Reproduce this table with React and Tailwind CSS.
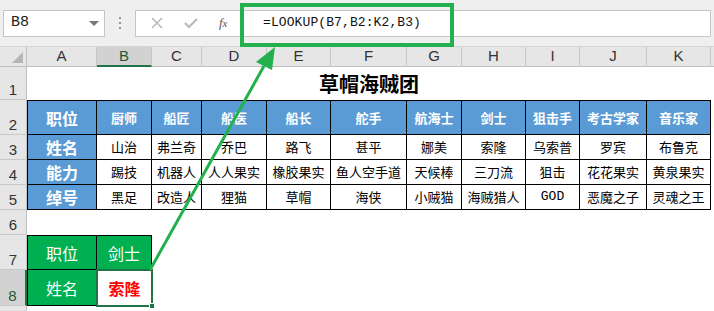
import React from 'react';

const cols = [
  { key: 'A', w: 'w-[70px]' },
  { key: 'B', w: 'w-[55px]' },
  { key: 'C', w: 'w-[50px]' },
  { key: 'D', w: 'w-[65px]' },
  { key: 'E', w: 'w-[64px]' },
  { key: 'F', w: 'w-[76px]' },
  { key: 'G', w: 'w-[55px]' },
  { key: 'H', w: 'w-[64px]' },
  { key: 'I', w: 'w-[54px]' },
  { key: 'J', w: 'w-[67px]' },
  { key: 'K', w: 'w-[64px]' },
];

const table = [
  ['职位', '厨师', '船匠', '船医', '船长', '舵手', '航海士', '剑士', '狙击手', '考古学家', '音乐家'],
  ['姓名', '山治', '弗兰奇', '乔巴', '路飞', '甚平', '娜美', '索隆', '乌索普', '罗宾', '布鲁克'],
  ['能力', '踢技', '机器人', '人人果实', '橡胶果实', '鱼人空手道', '天候棒', '三刀流', '狙击', '花花果实', '黄泉果实'],
  ['绰号', '黑足', '改造人', '狸猫', '草帽', '海侠', '小贼猫', '海贼猎人', 'GOD', '恶魔之子', '灵魂之王'],
];

const cjk = "font-['SimSun','Noto_Sans_CJK_SC',sans-serif]";

function RowHead({ n, h, active }) {
  return (
    <div
      className={`w-[27px] shrink-0 ${h} flex items-end justify-center pb-[2px] border-b border-[#c8c8c8] text-[15px] leading-none font-['Liberation_Sans',sans-serif] ${
        active ? 'bg-[#d2d2d2] border-r-2 border-r-[#217346] text-[#1d5a35]' : 'bg-[#e6e6e6] border-r border-r-[#c0c0c0] text-[#333]'
      }`}
    >
      {n}
    </div>
  );
}

function Toolbar() {
  return (
    <div className="h-[47px] bg-[#efefef] flex items-center px-[3px] gap-0 border-b border-[#d4d4d4]">
      <div className="w-[102px] h-[27px] bg-white border border-[#c6c6c6] flex items-center justify-between pl-[7px] pr-[5px]">
        <span className="text-[15px] font-['Liberation_Mono',monospace] text-[#222]">B8</span>
        <span className="w-0 h-0 border-l-[5px] border-r-[5px] border-t-[5px] border-l-transparent border-r-transparent border-t-[#777]" />
      </div>
      <div className="w-[30px] flex flex-col items-center gap-[3px]">
        <span className="w-[2px] h-[2px] bg-[#999]" />
        <span className="w-[2px] h-[2px] bg-[#999]" />
        <span className="w-[2px] h-[2px] bg-[#999]" />
      </div>
      <div className="w-[106px] h-[27px] bg-white border border-[#c6c6c6] flex items-center justify-around pl-[4px] pr-[2px]">
        <svg width="12" height="12" viewBox="0 0 12 12" stroke="#b8b8b8" strokeWidth="1.5">
          <path d="M1 1 L11 11 M11 1 L1 11" />
        </svg>
        <svg width="14" height="11" viewBox="0 0 14 11" fill="none" stroke="#b8b8b8" strokeWidth="2">
          <path d="M1 5 L5 9 L13 1" />
        </svg>
        <span className="text-[13px] italic font-['Liberation_Serif',serif] text-[#555]">
          f<span className="text-[11px]">x</span>
        </span>
      </div>
      <div className="flex-1 h-[27px] bg-white border border-[#c6c6c6] ml-[2px] flex items-center pl-[19px]">
        <span className="text-[13px] font-['Liberation_Mono',monospace] text-[#111] tracking-[0.1px]">
          =LOOKUP(B7,B2:K2,B3)
        </span>
      </div>
    </div>
  );
}

export default function App() {
  return (
    <div className="relative w-[714px] h-[311px] overflow-hidden bg-white">
      <Toolbar />

      {/* column headers */}
      <div className="flex h-[20px]">
        <div className="w-[27px] shrink-0 bg-[#e6e6e6] border-r border-b border-[#c0c0c0] relative">
          <span className="absolute right-[3px] bottom-[3px] w-0 h-0 border-b-[11px] border-l-[11px] border-l-transparent border-b-[#b5b5b5]" />
        </div>
        {cols.map((c) => (
          <div
            key={c.key}
            className={`${c.w} shrink-0 flex items-center justify-center border-r border-[#c8c8c8] text-[15px] font-['Liberation_Sans',sans-serif] ${
              c.key === 'B' ? 'bg-[#d2d2d2] border-b-2 border-b-[#217346] text-[#1d5a35]' : 'bg-[#e6e6e6] border-b border-b-[#c0c0c0] text-[#333]'
            }`}
          >
            {c.key}
          </div>
        ))}
        <div className="flex-1 bg-[#e6e6e6] border-b border-[#c0c0c0]" />
      </div>

      {/* row 1: merged title */}
      <div className="flex">
        <RowHead n="1" h="h-[33px]" />
        <div className={`w-[684px] h-[33px] flex items-center justify-center text-[20px] font-bold text-black ${cjk}`}>
          草帽海贼团
        </div>
      </div>

      {/* rows 2-5 */}
      {table.map((row, ri) => {
        const tall = ri === 0;
        return (
          <div key={ri} className="flex">
            <RowHead n={ri + 2} h={tall ? 'h-[35px]' : 'h-[25px]'} />
            {row.map((txt, ci) => {
              const head = ri === 0 || ci === 0;
              return (
                <div
                  key={ci}
                  className={`${cols[ci].w} shrink-0 ${tall ? 'h-[35px]' : 'h-[25px]'} flex items-center justify-center border-r border-b border-black ${
                    ri === 0 ? 'border-t' : ''
                  } ${ci === 0 ? 'border-l text-[16px]' : 'text-[13px]'} ${
                    head ? 'bg-[#5b9bd5] text-white font-bold' : 'bg-white text-black'
                  } ${txt === 'GOD' ? "font-['Liberation_Mono',monospace]" : cjk} whitespace-nowrap`}
                >
                  {txt}
                </div>
              );
            })}
          </div>
        );
      })}

      {/* row 6 */}
      <div className="flex">
        <RowHead n="6" h="h-[25px]" />
      </div>

      {/* rows 7-8: lookup result */}
      <div className="flex">
        <RowHead n="7" h="h-[35px]" />
        <div className={`w-[70px] h-[35px] shrink-0 bg-[#00b050] border border-black text-white text-[16px] flex items-center justify-center ${cjk}`}>
          职位
        </div>
        <div className={`w-[55px] h-[35px] shrink-0 bg-[#00b050] border-y border-r border-black text-white text-[16px] flex items-center justify-center ${cjk}`}>
          剑士
        </div>
      </div>
      <div className="flex">
        <RowHead n="8" h="h-[36px]" active />
        <div className={`w-[70px] h-[36px] shrink-0 bg-[#00b050] border-x border-b border-black text-white text-[16px] flex items-center justify-center ${cjk}`}>
          姓名
        </div>
        <div className={`relative w-[55px] h-[36px] shrink-0 bg-white text-[#ff0000] text-[16px] font-bold flex items-center justify-center ${cjk}`}>
          索隆
          <span className="absolute -left-px -top-px -right-px -bottom-px border-2 border-[#217346]" />
          <span className="absolute -right-[3px] -bottom-[3px] w-[6px] h-[6px] bg-[#217346] border border-white" />
        </div>
      </div>
      <div className="flex">
        <RowHead n="" h="h-[20px]" />
      </div>

      {/* highlight around the formula */}
      <div className="absolute left-[240px] top-[3px] w-[214px] h-[44px] border-4 border-[#22b14c] pointer-events-none" />

      {/* arrow from result cell to the formula */}
      <svg className="absolute inset-0 pointer-events-none" width="714" height="311">
        <line x1="150" y1="270" x2="264" y2="66" stroke="#22b14c" strokeWidth="3" />
        <polygon points="275,47 256,62 272,70" fill="#22b14c" />
      </svg>
    </div>
  );
}
